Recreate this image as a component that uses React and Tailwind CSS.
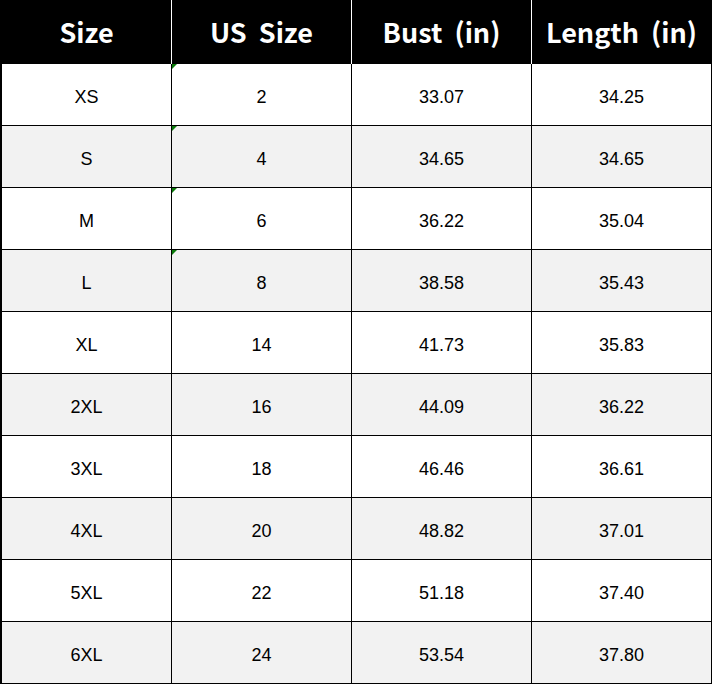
const rows = [
  ['XS', '2', '33.07', '34.25'],
  ['S', '4', '34.65', '34.65'],
  ['M', '6', '36.22', '35.04'],
  ['L', '8', '38.58', '35.43'],
  ['XL', '14', '41.73', '35.83'],
  ['2XL', '16', '44.09', '36.22'],
  ['3XL', '18', '46.46', '36.61'],
  ['4XL', '20', '48.82', '37.01'],
  ['5XL', '22', '51.18', '37.40'],
  ['6XL', '24', '53.54', '37.80'],
];

const headers = ['Size', 'US Size', 'Bust (in)', 'Length (in)'];
const widths = ['w-[170px]', 'w-[180px]', 'w-[180px]', 'w-[180px]'];

export default function App() {
  return (
    <div className="w-[713px] h-[685px] bg-white">
      <div className="w-[712px] border-l-2 border-black">
        {/* header */}
        <div className="flex h-[64px] bg-black text-white font-bold text-[27px] leading-none [word-spacing:6px]" style={{ fontFamily: '"Noto Sans CJK KR", "Noto Sans", sans-serif' }}>
          {headers.map((h, i) => (
            <div
              key={h}
              className={`${widths[i]} flex items-center justify-center pb-[2px] ${i < 3 ? 'border-r border-white' : 'border-r border-black'}`}
            >
              {h}
            </div>
          ))}
        </div>
        {/* body */}
        {rows.map((r, ri) => (
          <div
            key={r[0]}
            className={`flex h-[62px] border-b border-black text-[18px] text-black ${ri % 2 === 1 ? 'bg-[#f2f2f2]' : 'bg-white'}`}
            style={{ fontFamily: '"Liberation Sans", Arial, sans-serif' }}
          >
            {r.map((c, ci) => (
              <div key={ci} className={`${widths[ci]} relative flex items-center justify-center pt-[6px] border-r border-black`}>
                {ci === 1 && ri < 4 && (
                  <span className="absolute top-0 left-0 w-0 h-0 border-t-[5px] border-r-[5px] border-t-[#0a7a0a] border-r-transparent" />
                )}
                {c}
              </div>
            ))}
          </div>
        ))}
      </div>
    </div>
  );
}
